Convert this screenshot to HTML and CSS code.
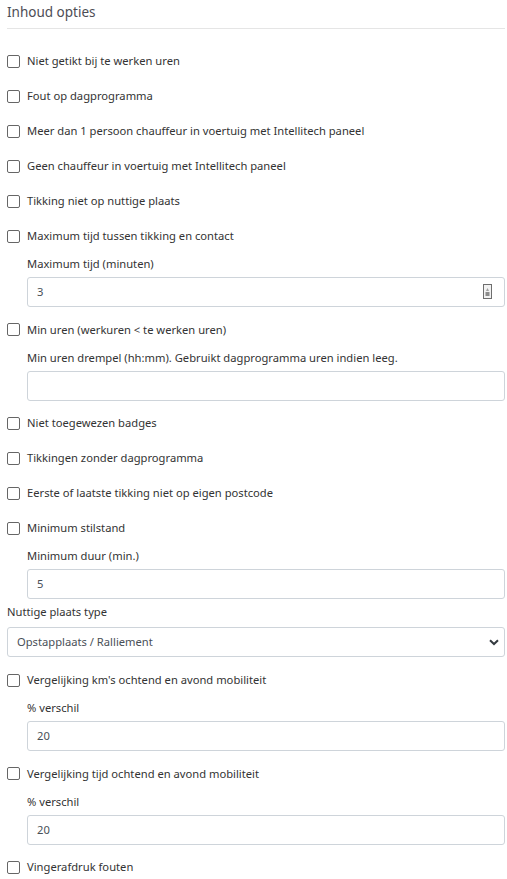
FILE: index.html
```html
<!DOCTYPE html>
<html lang="nl">
<head>
<meta charset="utf-8">
<title>Inhoud opties</title>
<link rel="stylesheet" href="styles.css">
</head>
<body>
<div class="panel">
  <h2 class="panel-title">Inhoud opties</h2>

  <div class="option"><label class="check"><span class="box"></span>Niet getikt bij te werken uren</label></div>
  <div class="option"><label class="check"><span class="box"></span>Fout op dagprogramma</label></div>
  <div class="option"><label class="check"><span class="box"></span>Meer dan 1 persoon chauffeur in voertuig met Intellitech paneel</label></div>
  <div class="option"><label class="check"><span class="box"></span>Geen chauffeur in voertuig met Intellitech paneel</label></div>
  <div class="option"><label class="check"><span class="box"></span>Tikking niet op nuttige plaats</label></div>

  <div class="option has-sub">
    <label class="check"><span class="box"></span>Maximum tijd tussen tikking en contact</label>
    <div class="sub">
      <div class="field-label">Maximum tijd (minuten)</div>
      <div class="input number">3<span class="spin"><svg width="9" height="15" viewBox="0 0 9 15"><rect x="0.5" y="0.5" width="8" height="14" fill="#f2f2f2" stroke="#6e6e6e"/><path d="M3 7 L4.5 4 L6 7 Z" fill="#a0a0a0"/><rect x="2.5" y="8" width="4" height="4" fill="#8c8c8c"/></svg></span></div>
    </div>
  </div>

  <div class="option has-sub">
    <label class="check"><span class="box"></span>Min uren (werkuren &lt; te werken uren)</label>
    <div class="sub">
      <div class="field-label">Min uren drempel (hh:mm). Gebruikt dagprogramma uren indien leeg.</div>
      <div class="input"></div>
    </div>
  </div>

  <div class="option"><label class="check"><span class="box"></span>Niet toegewezen badges</label></div>
  <div class="option"><label class="check"><span class="box"></span>Tikkingen zonder dagprogramma</label></div>
  <div class="option"><label class="check"><span class="box"></span>Eerste of laatste tikking niet op eigen postcode</label></div>

  <div class="option has-sub tight">
    <label class="check"><span class="box"></span>Minimum stilstand</label>
    <div class="sub">
      <div class="field-label">Minimum duur (min.)</div>
      <div class="input">5</div>
    </div>
  </div>

  <div class="group">
    <div class="field-label">Nuttige plaats type</div>
    <div class="input select">Opstapplaats / Ralliement<svg class="chev" width="10" height="7" viewBox="0 0 10 7"><path d="M1 1.2 L5 5 L9 1.2" fill="none" stroke="#343a40" stroke-width="2"/></svg></div>
  </div>

  <div class="option has-sub">
    <label class="check"><span class="box"></span>Vergelijking km's ochtend en avond mobiliteit</label>
    <div class="sub">
      <div class="field-label">% verschil</div>
      <div class="input">20</div>
    </div>
  </div>

  <div class="option has-sub">
    <label class="check"><span class="box"></span>Vergelijking tijd ochtend en avond mobiliteit</label>
    <div class="sub">
      <div class="field-label">% verschil</div>
      <div class="input">20</div>
    </div>
  </div>

  <div class="option"><label class="check"><span class="box"></span>Vingerafdruk fouten</label></div>
</div>
</body>
</html>
```
FILE: styles.css
```css
html, body {
  margin: 0;
  padding: 0;
  background: #ffffff;
}

body {
  font-family: "Noto Sans", "Open Sans", sans-serif;
  font-size: 11.2px;
  color: #333333;
}

.panel {
  padding: 0 2px 0 7px;
}

.panel-title {
  margin: 0;
  padding: 3px 0 0;
  height: 25px;
  font-size: 13.5px;
  font-weight: normal;
  line-height: 18px;
  color: #4d4d55;
  border-bottom: 1px solid #e5e5e5;
  margin-bottom: 23px;
}

.option {
  margin-bottom: 17px;
}

.option.has-sub {
  margin-bottom: 13.5px;
}

.option.tight {
  margin-bottom: 5px;
}

.check {
  display: flex;
  align-items: center;
  height: 18px;
  line-height: 18px;
  gap: 7px;
}

.box {
  flex: none;
  width: 11px;
  height: 11px;
  border: 1px solid #666666;
  border-radius: 2px;
  background: #fff;
}

.sub {
  margin: 11px 0 0 20px;
}

.field-label {
  height: 16px;
  line-height: 16px;
  margin-bottom: 5px;
}

.input {
  position: relative;
  box-sizing: border-box;
  height: 30px;
  line-height: 28px;
  padding: 0 9px;
  border: 1px solid #ced4da;
  border-radius: 3px;
  color: #495057;
  background: #fff;
}

.spin {
  position: absolute;
  right: 12px;
  top: 6px;
  width: 9px;
  height: 15px;
  line-height: 0;
}

.group {
  margin-bottom: 14px;
}

.group .field-label {
  margin-bottom: 7px;
}

.select {
  display: flex;
  align-items: center;
  justify-content: space-between;
}

.chev {
  margin-right: -4px;
}
```
